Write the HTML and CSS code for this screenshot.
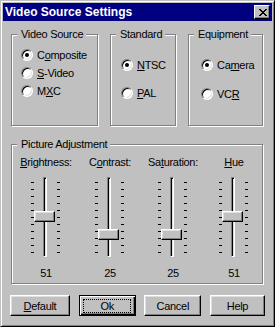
FILE: index.html
```html
<!DOCTYPE html>
<html lang="en">
<head>
<meta charset="utf-8">
<title>Video Source Settings</title>
<link rel="stylesheet" href="styles.css">
</head>
<body>
<div class="window">
    <div class="titlebar">
        <span class="title">Video Source Settings</span>
        <span class="close">
            <svg width="8" height="7" viewBox="0 0 8 7" shape-rendering="crispEdges"><path d="M0 0h2v1H0z M6 0h2v1H6z M1 1h2v1H1z M5 1h2v1H5z M2 2h4v1H2z M3 3h2v1H3z M2 4h4v1H2z M1 5h2v1H1z M5 5h2v1H5z M0 6h2v1H0z M6 6h2v1H6z" fill="#000"/></svg>
        </span>
    </div>

    <div class="client">
        <div class="groups">
            <fieldset class="group source">
                <legend>Video Source</legend>
                <div class="options">
                    <div class="radio on"><i class="bullet"></i><span>C<u>o</u>mposite</span></div>
                    <div class="radio"><i class="bullet"></i><span><u>S</u>-Video</span></div>
                    <div class="radio"><i class="bullet"></i><span>M<u>X</u>C</span></div>
                </div>
            </fieldset>
            <fieldset class="group standard">
                <legend>Standard</legend>
                <div class="options">
                    <div class="radio on"><i class="bullet"></i><span><u>N</u>TSC</span></div>
                    <div class="radio"><i class="bullet"></i><span><u>P</u>AL</span></div>
                </div>
            </fieldset>
            <fieldset class="group equipment">
                <legend>Equipment</legend>
                <div class="options">
                    <div class="radio on"><i class="bullet"></i><span>Ca<u>m</u>era</span></div>
                    <div class="radio"><i class="bullet"></i><span>VC<u>R</u></span></div>
                </div>
            </fieldset>
        </div>

        <fieldset class="group adjust">
            <legend>Picture Adjustment</legend>
            <div class="sliders">
                <div class="control">
                    <div class="caption"><u>B</u>rightness:</div>
                    <div class="slider">
                        <span class="ticks"></span>
                        <span class="track"></span>
                        <span class="ticks"></span>
                        <span class="thumb" style="top: 34px"></span>
                    </div>
                    <div class="value">51</div>
                </div>
                <div class="control">
                    <div class="caption">C<u>o</u>ntrast:</div>
                    <div class="slider">
                        <span class="ticks"></span>
                        <span class="track"></span>
                        <span class="ticks"></span>
                        <span class="thumb" style="top: 52px"></span>
                    </div>
                    <div class="value">25</div>
                </div>
                <div class="control">
                    <div class="caption">Sa<u>t</u>uration:</div>
                    <div class="slider">
                        <span class="ticks"></span>
                        <span class="track"></span>
                        <span class="ticks"></span>
                        <span class="thumb" style="top: 52px"></span>
                    </div>
                    <div class="value">25</div>
                </div>
                <div class="control">
                    <div class="caption"><u>H</u>ue</div>
                    <div class="slider">
                        <span class="ticks"></span>
                        <span class="track"></span>
                        <span class="ticks"></span>
                        <span class="thumb" style="top: 34px"></span>
                    </div>
                    <div class="value">51</div>
                </div>
            </div>
        </fieldset>

        <div class="buttons">
            <button class="btn wide"><span><u>D</u>efault</span></button>
            <button class="btn default"><span class="focus">Ok</span></button>
            <button class="btn"><span>Cancel</span></button>
            <button class="btn narrow"><span>Help</span></button>
        </div>
    </div>
</div>
</body>
</html>
```

FILE: styles.css
```css
* {
    box-sizing: border-box;
}

body {
    margin: 0;
    background: #c0c0c0;
    color: #000;
    font-family: "Liberation Sans", Arial, sans-serif;
    font-size: 11px;
    letter-spacing: -0.3px;
}

.window {
    width: 275px;
    height: 327px;
    padding: 2px;
    background: #c0c0c0;
    border: 1px solid;
    border-color: #c0c0c0 #000 #000 #c0c0c0;
    box-shadow: inset 1px 1px #fff, inset -1px -1px #808080;
}

/** title bar */
.titlebar {
    height: 18px;
    padding: 0 2px 0 2px;
    display: flex;
    align-items: center;
    justify-content: space-between;
    background: #000080;
}

.title {
    color: #fff;
    font-size: 12px;
    font-weight: bold;
    letter-spacing: 0;
}

.close {
    width: 16px;
    height: 14px;
    display: flex;
    align-items: center;
    justify-content: center;
    padding-left: 1px;
    background: #c0c0c0;
    border: 1px solid;
    border-color: #fff #000 #000 #fff;
    box-shadow: inset -1px -1px #808080;
}

.close svg {
    display: block;
}

.client {
    padding: 7px 8px 0 8px;
}

/** etched group boxes */
.group {
    margin: 0;
    padding: 0;
    min-width: 0;
    border: 1px solid #808080;
    box-shadow: inset 1px 1px #fff, 1px 1px #fff;
}

.group legend {
    margin-left: 5px;
    padding: 0 3px 0 4px;
    line-height: 13px;
    background: #c0c0c0;
}

.groups {
    display: flex;
    gap: 12px;
}

.groups .group {
    height: 98px;
}

.source { width: 87px; }
.standard { width: 66px; }
.equipment { width: 75px; }

.options {
    display: flex;
    flex-direction: column;
}

.source .options { padding: 5px 0 0 9px; }
.standard .options { padding: 15px 0 0 10px; gap: 10px; }
.equipment .options { padding: 15px 0 0 12px; gap: 11px; }

.radio {
    height: 18px;
    display: flex;
    align-items: center;
    gap: 4px;
    line-height: 13px;
}

.bullet {
    position: relative;
    flex: none;
    width: 12px;
    height: 12px;
    border-radius: 50%;
    border: 1px solid;
    border-color: #808080 #fff #fff #808080;
    background: #fff;
    box-shadow: inset 1px 1px #000, inset -1px -1px #dfdfdf;
}

.on .bullet::after {
    content: "";
    position: absolute;
    left: 3px;
    top: 3px;
    width: 4px;
    height: 4px;
    border-radius: 50%;
    background: #000;
}

/** picture adjustment */
.adjust {
    width: 252px;
    height: 146px;
    margin-top: 12px;
}

.sliders {
    display: grid;
    grid-template-columns: 64px 64px 62px 60px;
    padding: 5px 0 0 2px;
}

.control {
    display: flex;
    flex-direction: column;
    align-items: center;
}

.caption,
.value {
    line-height: 13px;
    white-space: nowrap;
}

.slider {
    position: relative;
    width: 30px;
    height: 80px;
    margin-top: 8px;
    padding-right: 1px;
    display: flex;
    align-items: flex-start;
}

.ticks {
    width: 3px;
    height: 71px;
    margin-top: 5px;
    background: repeating-linear-gradient(to bottom, #000 0 1px, transparent 1px 7px);
}

.track {
    width: 4px;
    height: 80px;
    margin: 0 10px 0 9px;
    border: 1px solid;
    border-color: #808080 #fff #fff #808080;
    box-shadow: inset 1px 1px #000, inset -1px -1px #dfdfdf;
}

.thumb {
    position: absolute;
    left: 3px;
    width: 21px;
    height: 11px;
    background: #c0c0c0;
    border: 1px solid;
    border-color: #fff #000 #000 #fff;
    box-shadow: inset -1px -1px #808080, inset 1px 1px #dfdfdf;
}

.value {
    margin-top: 10px;
}

/** buttons */
.buttons {
    display: flex;
    justify-content: space-between;
    margin: 11px -1px 0 -1px;
}

.btn {
    width: 57px;
    height: 21px;
    padding: 0;
    display: flex;
    align-items: center;
    justify-content: center;
    font: inherit;
    letter-spacing: inherit;
    color: #000;
    background: #c0c0c0;
    border: 1px solid;
    border-color: #fff #000 #000 #fff;
    box-shadow: inset -1px -1px #808080, inset 1px 1px #dfdfdf;
}

.btn.wide { width: 60px; }
.btn.narrow { width: 55px; }

.btn.default {
    border-color: #000;
    box-shadow: inset 1px 1px #fff, inset -1px -1px #000, inset -2px -2px #808080;
}

.focus {
    width: 48px;
    height: 14px;
    display: flex;
    align-items: center;
    justify-content: center;
    border: 1px dotted #000;
}
```
